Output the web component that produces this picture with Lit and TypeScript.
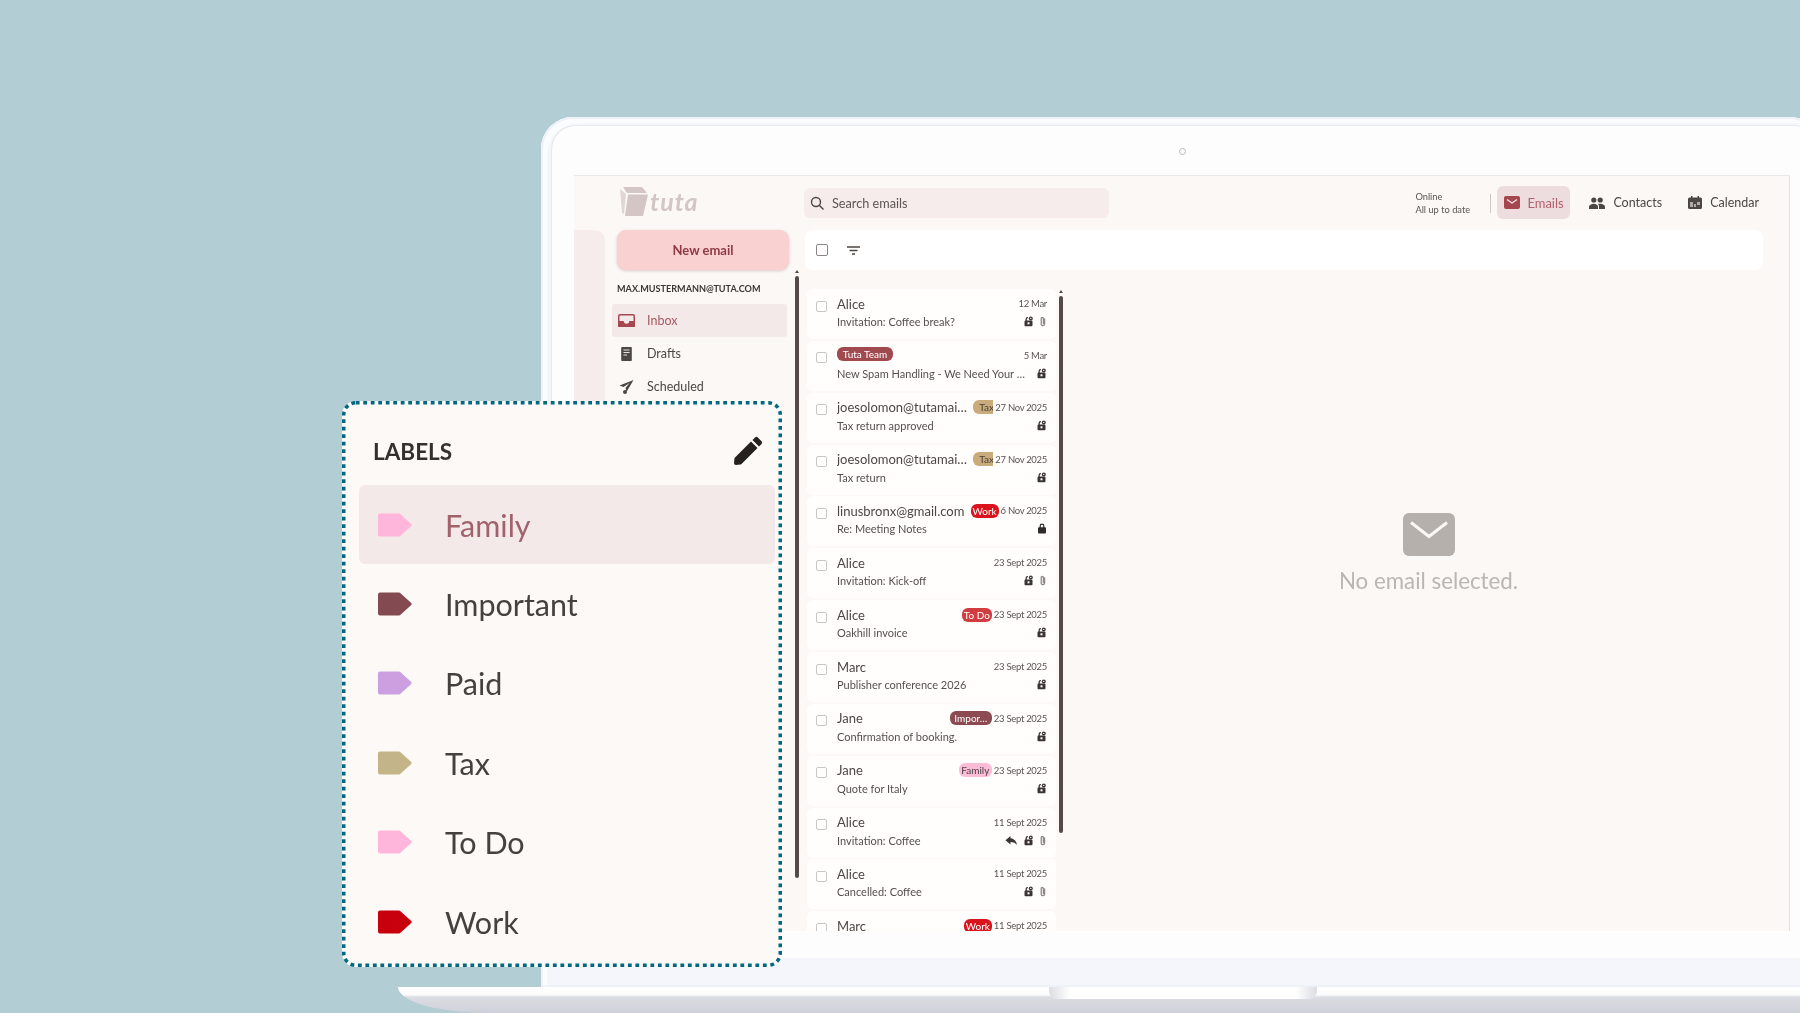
import { LitElement, html, css, svg } from "lit";
import { customElement } from "lit/decorators.js";

type Badge = { text: string; bg: string; fg: string; width: number; clip?: boolean };
type Mail = { from?: string; team?: string; badge?: Badge; date: string; subj: string; icons: string };
const W: Badge = { text: "Work", bg: "#d9141c", fg: "#fff", width: 28 };
const TAX: Badge = { text: "Tax", bg: "#c9ab7c", fg: "#4a3f35", width: 20, clip: true };
const mails: Mail[] = [
  { from: "Alice", date: "12 Mar", subj: "Invitation: Coffee break?", icons: "ka" },
  { team: "Tuta Team", date: "5 Mar", subj: "New Spam Handling - We Need Your Feedback", icons: "k" },
  { from: "joesolomon@tutamail.com", badge: TAX, date: "27 Nov 2025", subj: "Tax return approved", icons: "k" },
  { from: "joesolomon@tutamail.com", badge: TAX, date: "27 Nov 2025", subj: "Tax return", icons: "k" },
  { from: "linusbronx@gmail.com", badge: W, date: "6 Nov 2025", subj: "Re: Meeting Notes", icons: "l" },
  { from: "Alice", date: "23 Sept 2025", subj: "Invitation: Kick-off", icons: "ka" },
  { from: "Alice", badge: { text: "To Do", bg: "#d03c40", fg: "#fff", width: 30 }, date: "23 Sept 2025", subj: "Oakhill invoice", icons: "k" },
  { from: "Marc", date: "23 Sept 2025", subj: "Publisher conference 2026", icons: "k" },
  { from: "Jane", badge: { text: "Impor…", bg: "#8c4a52", fg: "#fff", width: 42 }, date: "23 Sept 2025", subj: "Confirmation of booking.", icons: "k" },
  { from: "Jane", badge: { text: "Family", bg: "#fcbcd8", fg: "#4a3f45", width: 33 }, date: "23 Sept 2025", subj: "Quote for Italy", icons: "k" },
  { from: "Alice", date: "11 Sept 2025", subj: "Invitation: Coffee", icons: "rka" },
  { from: "Alice", date: "11 Sept 2025", subj: "Cancelled: Coffee", icons: "ka" },
  { from: "Marc", badge: W, date: "11 Sept 2025", subj: "", icons: "" },
];
const labels: [string, string][] = [
  ["Family", "#ffb6da"], ["Important", "#844a52"], ["Paid", "#cb9fe0"],
  ["Tax", "#c4b588"], ["To Do", "#ffb6da"], ["Work", "#c8000e"],
];

const keyIcon = svg`<svg width="11" height="11" viewBox="0 0 11 11"><path fill="#3a3533" d="M2.500 4.500V3.200A2.300 2.300 0 0 1 5 1l-.2 1.300a1 1 0 0 0-1 1v1.200H8.500a1 1 0 0 1 1 1v3.800a1 1 0 0 1-1 1h-6a1 1 0 0 1-1-1V5.500a1 1 0 0 1 1-1z"/><circle cx="7.800" cy="2.400" r="2" fill="#3a3533"/><rect x="4.500" y="6.300" width="2" height="2" fill="#fffdfb"/><circle cx="7.800" cy="2.400" r=".7" fill="#fffdfb"/></svg>`;
const lockIcon = svg`<svg width="10" height="11" viewBox="0 0 10 11"><path fill="#2e2a28" d="M2.600 4.200V3a2.400 2.400 0 0 1 4.800 0v1.200H8a1 1 0 0 1 1 1v4.300a1 1 0 0 1-1 1H2a1 1 0 0 1-1-1V5.200a1 1 0 0 1 1-1zm1.200 0h2.400V3a1.200 1.200 0 0 0-2.400 0z"/></svg>`;
const clipIcon = svg`<svg width="8" height="11" viewBox="0 0 8 11"><path fill="none" stroke="#8e8a88" stroke-width="1.300" stroke-linecap="round" d="M5.600 3v5a1.700 1.700 0 0 1-3.400 0V2.600a1.100 1.100 0 0 1 2.200 0V7.500"/></svg>`;
const replyIcon = svg`<svg width="13" height="11" viewBox="0 0 13 11"><path fill="#3a3533" d="M5.500 1 .5 5.200l5 4.300V6.900c3 0 5 .8 6.500 3.100-.5-3.500-2.500-6.300-6.500-6.800z"/></svg>`;

@customElement("app-root")
export class AppRoot extends LitElement {
  static styles = css`
    :host { display: block; width: 1800px; height: 1013px; font-family: "Lato", "Noto Sans", sans-serif; }
    * { box-sizing: border-box; }
    .page { position: relative; width: 1800px; height: 1013px; overflow: hidden; background: #b2cdd4; padding: 117px 0 0 541px; }
    .laptop { width: 1281px; height: 870px; border-radius: 32px 32px 0 0; background: #f5f6fb; padding: 9px 0 0 11px; box-shadow: inset 0 0 0 2px #eef1f6, inset 6px 6px 0 0 #fbfcfd; }
    .screen { width: 1266px; height: 832px; background: #fdfdfd; border-radius: 24px 24px 0 0; box-shadow: -1px -1px 0 #e6eaed; padding-top: 49px; }
    .cam { display: flex; justify-content: center; width: 1260px; height: 0; }
    .cam i { width: 7px; height: 7px; margin-top: -27px; border-radius: 50%; border: 1.500px solid #b9bcbc; }
    .app { width: 1216px; height: 756px; margin-left: 22px; background: #fcf8f6; overflow: hidden; border-top: 1px solid #e9e9e8; border-right: 1px solid #e3e3e3; color: #4c4744; display: grid; grid-template-columns: 43px 188px 1fr; grid-template-rows: 54px 1fr; filter: blur(0.45px); }
    .logo { display: flex; align-items: center; gap: 2px; height: 30px; margin: 10px 0 0 3px; color: #d3c6c5; font-size: 25px; font-weight: 700; font-style: italic; letter-spacing: 1px; }
    .top { display: flex; align-items: flex-start; padding-top: 10px; padding-right: 30px; }
    .search { width: 305px; height: 30px; margin: 2px 0 0 -1px; border-radius: 6px; background: #f5eceb; display: flex; align-items: center; gap: 7px; padding-left: 5px; font-size: 12.700px; color: #5a5552; }
    .status { margin-left: auto; font-size: 9.300px; line-height: 13px; color: #5a5552; margin-top: 4px; width: 75px; }
    .sep { width: 1px; height: 19px; background: #cfc6c4; margin: 8px 6px 0 0; }
    .nav { display: flex; align-items: center; gap: 8px; height: 33px; font-size: 12.500px; border-radius: 6px; }
    .nav.on { width: 73px; background: #eedddf; color: #b0606a; padding-left: 7px; font-size: 13px; gap: 7px; }
    .nav.c { margin-left: 19px; } .nav.k { margin-left: 26px; }
    .strip { background: #f5eceb; width: 31px; border-top-right-radius: 10px; }
    .side { display: flex; gap: 6px; min-height: 0; }
    .side-in { width: 172px; flex: none; }
    .new { height: 40px; border-radius: 9px; background: #f9d1d1; color: #8f3a44; font-size: 13px; font-weight: 700; display: flex; align-items: center; justify-content: center; box-shadow: 0 1px 3px rgba(120,60,60,.25); }
    .acct { font-size: 9.100px; font-weight: 700; color: #3c3836; margin: 13px 0 9px; line-height: 12px; white-space: nowrap; }
    .f { display: flex; align-items: center; width: 175px; height: 33px; margin-left: -5px; border-radius: 3px; font-size: 12.500px; padding-left: 6px; gap: 12px; }
    .f svg { width: 17px; flex: none; }
    .f.on { background: #f3e9e8; color: #a65a62; }
    .sbar { position: relative; width: 4px; border-radius: 2px; background: #544a48; flex: none; }
    .sbar::before { content: ""; position: absolute; left: 0; top: -6px; border: solid transparent; border-width: 0 2px 3px; border-bottom-color: #544a48; }
    .sbar.a { height: 602px; margin-top: 46px; }
    .sbar.b { height: 537px; margin: 26px 0 0 3px; }
    .main { display: flex; flex-direction: column; min-height: 0; }
    .tools { width: 958px; height: 40px; flex: none; background: #fff; border-radius: 8px; display: flex; align-items: center; padding-left: 11px; gap: 19px; }
    .cb { width: 11px; height: 11px; flex: none; border: 1.500px solid #c9c7c6; border-radius: 2px; background: #fff; }
    .tools .cb { border-color: #8a8583; width: 12px; height: 12px; }
    .split { display: flex; flex: 1; min-height: 0; }
    .list { width: 249px; margin: 19px 0 0 2px; display: flex; flex-direction: column; gap: 1.860px; flex: none; }
    .row { height: 50px; flex: none; background: #fffefd; border-radius: 6px; display: flex; padding: 6.500px 9px 0 9px; gap: 10px; }
    .row .cb { margin-top: 5px; }
    .col { flex: 1; min-width: 0; display: flex; flex-direction: column; gap: 2px; }
    .l1, .l2 { display: flex; align-items: center; min-width: 0; height: 16px; }
    .from { flex: 1; min-width: 0; font-size: 13px; white-space: nowrap; overflow: hidden; text-overflow: ellipsis; }
    .badge { flex: none; height: 14px; border-radius: 6px; font-size: 10px; line-height: 14px; text-align: center; overflow: hidden; white-space: nowrap; margin-left: 4px; }
    .badge.clip { text-align: left; padding-left: 6px; border-radius: 6px 0 0 6px; }
    .badge.team { width: 56px; margin-left: 0; }
    .date { flex: none; font-size: 9.500px; letter-spacing: -0.3px; margin-left: 2px; color: #5a5552; }
    .subj { flex: 1; min-width: 0; font-size: 11px; white-space: nowrap; overflow: hidden; text-overflow: ellipsis; color: #55504d; }
    .ico { display: flex; align-items: center; gap: 5px; flex: none; margin-left: 10px; }
    .pane { flex: 1; display: flex; flex-direction: column; align-items: center; padding: 243px 0 0 5px; }
    .none { font-size: 22.300px; color: #bab6b3; margin-top: 11px; }
    .popup { position: absolute; left: 342px; top: 401px; width: 440px; height: 566px; background: #fdf9f6; border-radius: 14px; padding: 3px 7px 3px 17px; color: #46413e; }
    .dots { position: absolute; inset: 0; }
    .ptitle { display: flex; justify-content: space-between; align-items: center; height: 81px; padding: 13px 0 0 14px; filter: blur(0.3px); }
    .ptitle b { font-size: 22.500px; font-weight: 700; color: #33302d; }
    .ptitle svg { margin-right: 12px; }
    .lab { display: flex; align-items: center; height: 79.400px; padding-left: 18px; gap: 33px; font-size: 30.500px; border-radius: 6px; filter: blur(0.3px); }
    .lab.on { background: #f2e9e8; color: #a2626b; }
    .base { width: 1500px; height: 26px; margin-left: -143px; background: linear-gradient(#fff 0, #fbfbfc 8px, #dcdde3 10px, #cfd1d9 100%); border-bottom-left-radius: 90px 26px; display: flex; justify-content: center; }
    .notch { width: 268px; height: 12px; margin-left: 69px; border-radius: 0 0 8px 8px; background: linear-gradient(90deg, #dcdde2, #fff 8%, #fff 92%, #dcdde2); }
  `;

  private icons(s: string) {
    return html`<span class="ico">${[...s].map((c) =>
      c === "k" ? keyIcon : c === "l" ? lockIcon : c === "a" ? clipIcon : replyIcon)}</span>`;
  }

  render() {
    return html`<div class="page">
      <div class="laptop"><div class="screen">
        <div class="cam"><i></i></div>
        <div class="app">
          <div></div>
          <div class="logo">
            <svg width="28" height="29" viewBox="0 0 28 29"><path fill="#d3c6c5" d="M3 0h19l5 6H7z"/><path fill="#d3c6c5" d="M8 7.500h20L23 29H5z"/><path fill="#e0d6d5" d="M0 2l6 5-2 20-2-1z"/></svg>
            <span>tuta</span>
          </div>
          <div class="top">
            <div class="search">
              <svg width="16" height="16" viewBox="0 0 16 16"><circle cx="7" cy="7" r="4.500" fill="none" stroke="#4c4744" stroke-width="1.400"/><path d="m10.500 10.500 4 4" stroke="#4c4744" stroke-width="1.500"/></svg>
              Search emails
            </div>
            <div class="status">Online<br />All up to date</div>
            <div class="sep"></div>
            <div class="nav on">
              <svg width="16" height="13" viewBox="0 0 16 13"><rect width="16" height="13" rx="2" fill="#a5474f"/><path d="m3 3.500 5 3.500 5-3.500" fill="none" stroke="#f5e5e5" stroke-width="1.300"/></svg>
              Emails
            </div>
            <div class="nav c">
              <svg width="16" height="12" viewBox="0 0 16 12"><circle cx="4.800" cy="3" r="2.600" fill="#4c4744"/><circle cx="11.200" cy="3" r="2.600" fill="#4c4744"/><path fill="#4c4744" d="M0 12V9.800C0 8 2.500 6.700 4.800 6.700S9 8 9 9.800V12zM10 12V9.500c0-1-.4-1.900-1-2.500.7-.2 1.500-.3 2.200-.3 2.300 0 4.800 1.300 4.800 3.100V12z"/></svg>
              Contacts
            </div>
            <div class="nav k">
              <svg width="14" height="13" viewBox="0 0 14 13"><path fill="#4c4744" d="M3 0h1.500v1.500h5V0H11v1.500h1.500A1.500 1.500 0 0 1 14 3v8.500a1.500 1.500 0 0 1-1.500 1.500h-11A1.500 1.500 0 0 1 0 11.500V3a1.500 1.500 0 0 1 1.500-1.500H3z"/><path fill="#b0aaa8" d="M2 6h3v5H2zM6 8h2v3H6zM9 6h3v3H9z"/></svg>
              Calendar
            </div>
          </div>

          <div class="strip"></div>
          <div class="side">
            <div class="side-in">
              <div class="new">New email</div>
              <div class="acct">MAX.MUSTERMANN@TUTA.COM</div>
              <div class="f on">
                <svg viewBox="0 0 16 13"><path fill="#a5474f" d="M2 0h12a2 2 0 0 1 2 2v9a2 2 0 0 1-2 2H2a2 2 0 0 1-2-2V2a2 2 0 0 1 2-2z"/><path fill="#f3e9e8" d="M2 1.500h12a.6.6 0 0 1 .6.6v4.400h-4a2.600 2.600 0 0 1-5.200 0h-4V2.100a.6.6 0 0 1 .6-.6z"/></svg>
                Inbox
              </div>
              <div class="f">
                <svg viewBox="0 0 16 14" height="14"><path fill="#4c4744" d="M3.500 0h9a.8.8 0 0 1 .8.8v12.400a.8.8 0 0 1-.8.8h-9a.8.8 0 0 1-.8-.8V.8a.8.8 0 0 1 .8-.8z"/><path stroke="#e8e2e0" stroke-width="1" d="M5 3h6M5 5.500h6M5 8h3.500"/></svg>
                Drafts
              </div>
              <div class="f">
                <svg viewBox="0 0 16 14" height="14"><path fill="#4c4744" d="M15 0 1 5.500l4 1.500 6-4-4 5 1 4z"/><circle cx="6.500" cy="12" r="2" fill="#4c4744"/></svg>
                Scheduled
              </div>
            </div>
            <div class="sbar a"></div>
          </div>

          <div class="main">
            <div class="tools">
              <div class="cb"></div>
              <svg width="13" height="9" viewBox="0 0 13 9"><path stroke="#4c4744" stroke-width="1.300" d="M0 1h13M2.500 4.500h8M5 8h3"/></svg>
            </div>
            <div class="split">
              <div class="list">
                ${mails.map((m) => html`<div class="row">
                  <div class="cb"></div>
                  <div class="col">
                    <div class="l1">
                      ${m.team
                        ? html`<span class="from"><span class="badge team" style="display:inline-block;background:#a04a50;color:#fff">${m.team}</span></span>`
                        : html`<span class="from">${m.from}</span>`}
                      ${m.badge ? html`<span class="badge ${m.badge.clip ? "clip" : ""}" style="width:${m.badge.width}px;background:${m.badge.bg};color:${m.badge.fg}">${m.badge.text}</span>` : ""}
                      <span class="date">${m.date}</span>
                    </div>
                    <div class="l2"><span class="subj">${m.subj}</span>${this.icons(m.icons)}</div>
                  </div>
                </div>`)}
              </div>
              <div class="sbar b"></div>
              <div class="pane">
                <svg width="52" height="43" viewBox="0 0 52 43"><rect width="52" height="43" rx="6" fill="#b5b0ac"/><path d="m8 9.500 18 14 18-14" fill="none" stroke="#fcf8f6" stroke-width="3"/></svg>
                <div class="none">No email selected.</div>
              </div>
            </div>
          </div>
        </div>
      </div></div>
      <div class="base"><div class="notch"></div></div>

      <div class="popup">
        <svg class="dots" width="440" height="566" viewBox="0 0 440 566"><rect x="1.750" y="1.750" width="436.500" height="562.500" rx="12" fill="none" stroke="#00687f" stroke-width="3.500" stroke-dasharray="3.800 3.700"/></svg>
        <div class="ptitle">
          <b>LABELS</b>
          <svg width="30" height="30" viewBox="0 0 30 30"><path fill="#26211e" d="M22 1.500a2 2 0 0 1 2.800 0l3.700 3.700a2 2 0 0 1 0 2.800L26 10.500 19.500 4zM18 5.500 24.500 12 8.500 28a2 2 0 0 1-1.500.6L3 29a2 2 0 0 1-2-2l.4-4a2 2 0 0 1 .6-1.500z"/></svg>
        </div>
        ${labels.map(([n, c], i) => html`<div class="lab ${i === 0 ? "on" : ""}">
          <svg width="35" height="24" viewBox="0 0 35 24"><path fill="${c}" d="M3 0.500h19a2 2 0 0 1 1.500.7l10.500 9.600a1.600 1.600 0 0 1 0 2.400L23.500 22.800a2 2 0 0 1-1.500.7H3a2 2 0 0 1-2-2V2.500a2 2 0 0 1 2-2z"/></svg>
          <span>${n}</span>
        </div>`)}
      </div>
    </div>`;
  }
}
